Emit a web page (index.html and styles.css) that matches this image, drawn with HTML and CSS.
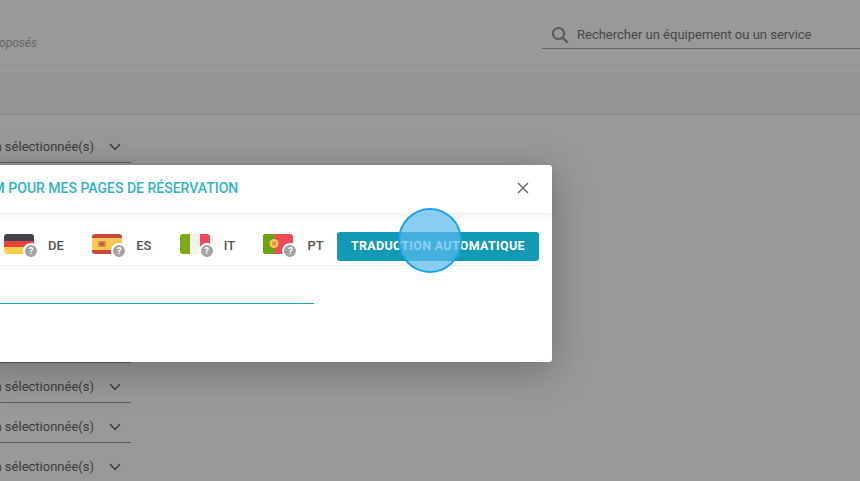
FILE: index.html
```html
<!DOCTYPE html>
<html lang="fr">
<head>
<meta charset="UTF-8">
<meta name="viewport" content="width=device-width, initial-scale=1.0">
<title>Équipements et services</title>
<link rel="stylesheet" href="styles.css">
</head>
<body>

<!-- Page behind the dialog -->
<div class="page">
<div class="top-bar">
<div class="top-note"><span>proposés</span></div>
<div class="search">
<svg class="search-icon" width="18" height="18" viewBox="0 0 18 18"><circle cx="7.5" cy="7.5" r="5.6" fill="none" stroke="currentColor" stroke-width="2"/><path d="M11.6 11.6 L16.6 16.6" stroke="currentColor" stroke-width="2.2" fill="none"/></svg>
<span>Rechercher un équipement ou un service</span>
</div>
</div>
<div class="tab-bar"></div>
<div class="select-list">
<div class="select-row"><span>Option sélectionnée(s)</span><svg class="chevron" width="12" height="8" viewBox="0 0 12 8"><path d="M1 1 L6 6.4 L11 1" fill="none" stroke="currentColor" stroke-width="1.5"/></svg></div>
<div class="select-row"><span>Option sélectionnée(s)</span><svg class="chevron" width="12" height="8" viewBox="0 0 12 8"><path d="M1 1 L6 6.4 L11 1" fill="none" stroke="currentColor" stroke-width="1.5"/></svg></div>
<div class="select-row"><span>Option sélectionnée(s)</span><svg class="chevron" width="12" height="8" viewBox="0 0 12 8"><path d="M1 1 L6 6.4 L11 1" fill="none" stroke="currentColor" stroke-width="1.5"/></svg></div>
<div class="select-row"><span>Option sélectionnée(s)</span><svg class="chevron" width="12" height="8" viewBox="0 0 12 8"><path d="M1 1 L6 6.4 L11 1" fill="none" stroke="currentColor" stroke-width="1.5"/></svg></div>
<div class="select-row"><span>Option sélectionnée(s)</span><svg class="chevron" width="12" height="8" viewBox="0 0 12 8"><path d="M1 1 L6 6.4 L11 1" fill="none" stroke="currentColor" stroke-width="1.5"/></svg></div>
<div class="select-row"><span>Option sélectionnée(s)</span><svg class="chevron" width="12" height="8" viewBox="0 0 12 8"><path d="M1 1 L6 6.4 L11 1" fill="none" stroke="currentColor" stroke-width="1.5"/></svg></div>
<div class="select-row"><span>Option sélectionnée(s)</span><svg class="chevron" width="12" height="8" viewBox="0 0 12 8"><path d="M1 1 L6 6.4 L11 1" fill="none" stroke="currentColor" stroke-width="1.5"/></svg></div>
<div class="select-row"><span>Option sélectionnée(s)</span><svg class="chevron" width="12" height="8" viewBox="0 0 12 8"><path d="M1 1 L6 6.4 L11 1" fill="none" stroke="currentColor" stroke-width="1.5"/></svg></div>
<div class="select-row"><span>Option sélectionnée(s)</span><svg class="chevron" width="12" height="8" viewBox="0 0 12 8"><path d="M1 1 L6 6.4 L11 1" fill="none" stroke="currentColor" stroke-width="1.5"/></svg></div>
</div>
</div>

<div class="backdrop"></div>

<!-- Dialog -->
<div class="modal">
<div class="modal-header">
<h2>NOM POUR MES PAGES DE RÉSERVATION</h2>
<svg class="close-icon" width="12" height="12" viewBox="0 0 12 12"><path d="M1 1 L11 11 M11 1 L1 11" fill="none" stroke="currentColor" stroke-width="1.4"/></svg>
</div>
<div class="lang-row">
<div class="lang">
<div class="flag">
<svg width="30" height="20" viewBox="0 0 30 20"><rect width="30" height="7" fill="#43434b"/><rect y="7" width="30" height="6" fill="#e8423f"/><rect y="13" width="30" height="7" fill="#f9cf4a"/></svg>
<span class="badge">?</span>
</div>
<span class="lang-code">DE</span>
</div>
<div class="lang">
<div class="flag">
<svg width="30" height="20" viewBox="0 0 30 20"><rect width="30" height="20" fill="#c9453f"/><rect y="4" width="30" height="12" fill="#f7c94e"/><rect x="6" y="7" width="8" height="6" rx="1" fill="#d98a4a"/><rect x="8.5" y="8.5" width="3" height="3" fill="#c9453f"/></svg>
<span class="badge">?</span>
</div>
<span class="lang-code">ES</span>
</div>
<div class="lang">
<div class="flag">
<svg width="30" height="20" viewBox="0 0 30 20"><rect width="10" height="20" fill="#7cab12"/><rect x="10" width="10" height="20" fill="#f2f2f2"/><rect x="20" width="10" height="20" fill="#f2495a"/></svg>
<span class="badge">?</span>
</div>
<span class="lang-code">IT</span>
</div>
<div class="lang">
<div class="flag">
<svg width="30" height="20" viewBox="0 0 30 20"><rect width="30" height="20" fill="#f2495a"/><rect width="12" height="20" fill="#6fa212"/><circle cx="11" cy="9.5" r="4.5" fill="#f7c94e"/><circle cx="11" cy="9.5" r="2.2" fill="#e0944a"/></svg>
<span class="badge">?</span>
</div>
<span class="lang-code">PT</span>
</div>
<button class="translate-btn">TRADUCTION AUTOMATIQUE</button>
</div>
<div class="name-field"></div>
</div>

<!-- Click marker from the screen capture -->
<div class="click-marker"></div>

</body>
</html>
```

FILE: styles.css
```css
html, body {
  height: 100%;
}

body {
  margin: 0;
  position: relative;
  overflow: hidden;
  background-color: #fff;
  font-family: Roboto, "Liberation Sans", sans-serif;
  color: #333;
}

.top-bar {
  height: 66px;
  box-sizing: border-box;
  padding-top: 23px;
  border-bottom: 1px solid #f0f0f0;
  display: flex;
  justify-content: space-between;
  align-items: flex-start;
}

.top-note {
  width: 37px;
  margin-top: 13px;
  display: flex;
  justify-content: flex-end;
  overflow: hidden;
  font-size: 12px;
  font-style: italic;
  color: #aaa;
}

.search {
  width: 318px;
  height: 26px;
  box-sizing: border-box;
  padding-left: 9px;
  padding-bottom: 2px;
  border-bottom: 1px solid #aaa;
  display: flex;
  align-items: center;
  gap: 8px;
  font-size: 13px;
  color: #777;
}

.search-icon {
  color: #999;
}

.tab-bar {
  height: 39px;
  margin-top: 7px;
  border-top: 1px solid #f0f0f0;
  border-bottom: 2px solid #e6e6e6;
  background-color: #f9f9f9;
}

.select-list {
  margin-top: 8px;
}

.select-row {
  width: 131px;
  height: 40px;
  box-sizing: border-box;
  padding: 16px 10px 0 0;
  border-bottom: 1px solid #999;
  display: flex;
  justify-content: flex-end;
  align-items: flex-start;
  gap: 15px;
  overflow: hidden;
  font-size: 13px;
  color: #666;
  white-space: nowrap;
}

.chevron {
  margin-top: 4px;
  flex-shrink: 0;
}

.backdrop {
  position: absolute;
  inset: 0;
  background-color: rgba(0, 0, 0, 0.4);
}

.modal {
  position: absolute;
  left: -20px;
  top: 165px;
  width: 572px;
  height: 197px;
  background-color: #fff;
  border-radius: 3px;
  box-shadow: 0 8px 40px rgba(0, 0, 0, 0.28);
}

.modal-header {
  height: 48px;
  box-sizing: border-box;
  padding: 0 23px 2px 0;
  display: flex;
  justify-content: space-between;
  align-items: center;
  box-shadow: 0 2px 8px rgba(0, 0, 0, 0.08);
}

.modal-header h2 {
  margin: 0 0 1px -7px;
  font-size: 14px;
  font-weight: 500;
  color: #2fb3c6;
  white-space: nowrap;
}

.close-icon {
  color: #666;
}

.lang-row {
  height: 53px;
  box-sizing: border-box;
  margin-right: 13px;
  padding: 19px 0 0 24px;
  border-bottom: 1px solid #eee;
  display: flex;
  align-items: flex-start;
  gap: 28.3px;
}

.lang {
  display: flex;
  align-items: flex-start;
  gap: 14px;
}

.flag {
  position: relative;
  width: 30px;
  height: 20px;
  margin-top: 2px;
}

.flag svg {
  display: block;
  border-radius: 3px;
}

.badge {
  position: absolute;
  right: -5px;
  bottom: -5px;
  width: 12px;
  height: 12px;
  border: 2px solid #fff;
  border-radius: 50%;
  background-color: #a3a3a3;
  color: #fff;
  font-size: 9px;
  font-weight: 700;
  line-height: 12px;
  text-align: center;
}

.lang-code {
  font-size: 13px;
  font-weight: 500;
  line-height: 28px;
  color: #555;
}

.translate-btn {
  width: 202px;
  height: 29px;
  margin-left: -15px;
  padding: 0 0 2px;
  border: none;
  border-radius: 3px;
  background-color: #129ab5;
  color: #fff;
  font-family: inherit;
  font-size: 12.5px;
  font-weight: 700;
  letter-spacing: 0.3px;
}

.name-field {
  width: 334px;
  height: 37px;
  border-bottom: 1px solid #1fa0b5;
}

.click-marker {
  position: absolute;
  left: 398px;
  top: 208px;
  width: 60px;
  height: 61px;
  border: 2.5px solid #1aa3e8;
  border-radius: 50%;
  background-color: rgba(90, 185, 240, 0.7);
}
```
